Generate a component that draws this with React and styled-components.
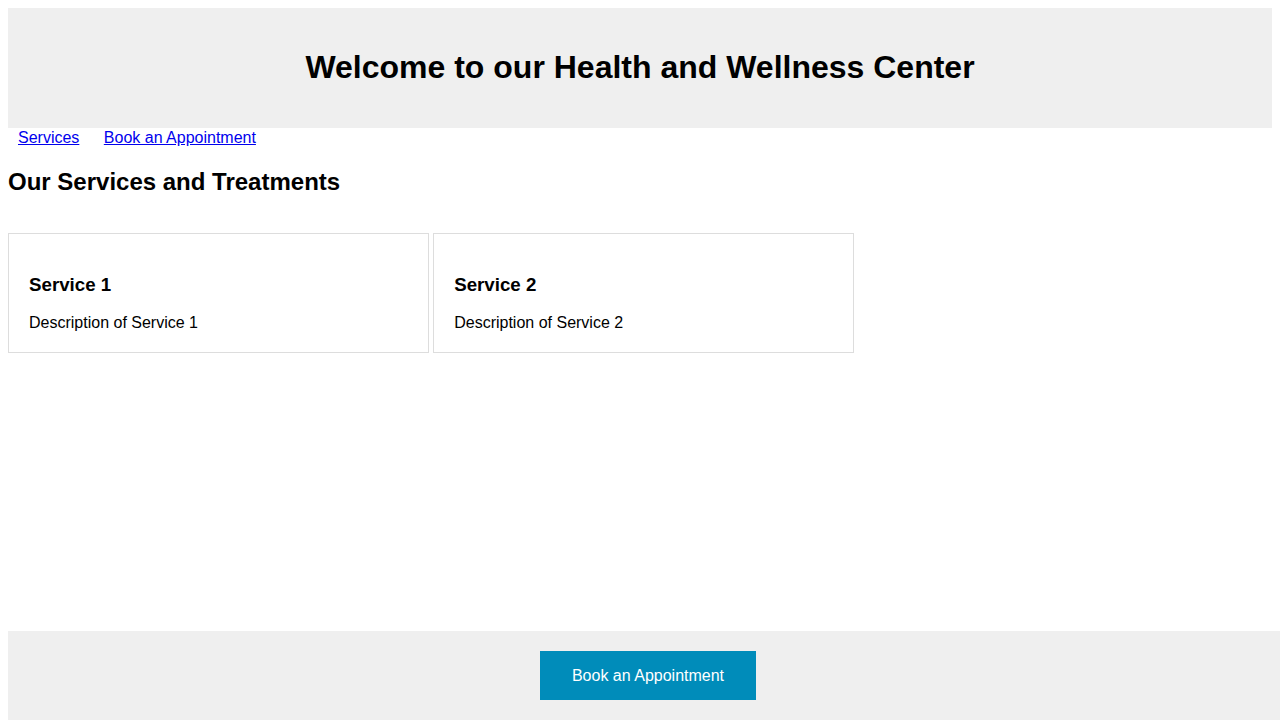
import React from "react";
import styled, { createGlobalStyle } from "styled-components";

const Global = createGlobalStyle`
  body {
    margin: 8px;
    font-family: "Liberation Sans", Arial, sans-serif;
    color: #000;
    background: #fff;
  }
`;

const Header = styled.header`
  background: #efefef;
  padding: 20px;
  text-align: center;
`;

const Title = styled.h1`
  font-size: 32px;
  margin: 21.44px 0;
`;

const Nav = styled.nav`
  padding-top: 1px;
  line-height: 18px;
  font-size: 16px;
`;

const NavLink = styled.a`
  color: #0000ee;
  margin: 0 10px;
`;

const SectionTitle = styled.h2`
  font-size: 24px;
  margin: 21px 0 19.92px;
`;

const Cards = styled.div`
  margin-top: 37px;
  font-size: 0;
`;

const Card = styled.div`
  display: inline-block;
  vertical-align: top;
  box-sizing: content-box;
  width: 30%;
  padding: 20px;
  border: 1px solid #ddd;
  font-size: 16px;
  & + & {
    margin-left: 4px;
  }
`;

const CardTitle = styled.h3`
  font-size: 18.72px;
  margin: 19.72px 0 18.72px;
`;

const CardText = styled.p`
  margin: 0;
`;

const Footer = styled.footer`
  position: fixed;
  bottom: 0;
  width: 100%;
  background: #efefef;
  padding: 20px 0;
  text-align: center;
`;

const Button = styled.a`
  display: inline-block;
  background: #008cba;
  color: #fff;
  padding: 15px 32px;
  font-size: 16px;
  line-height: 19px;
  text-decoration: none;
`;

const services = [
  { title: "Service 1", text: "Description of Service 1" },
  { title: "Service 2", text: "Description of Service 2" },
];

export default function App() {
  return (
    <>
      <Global />
      <Header>
        <Title>Welcome to our Health and Wellness Center</Title>
      </Header>
      <Nav>
        <NavLink href="#services">Services</NavLink>{" "}
        <NavLink href="#book">Book an Appointment</NavLink>
      </Nav>
      <section id="services">
        <SectionTitle>Our Services and Treatments</SectionTitle>
        <Cards>
          {services.map((s) => (
            <Card key={s.title}>
              <CardTitle>{s.title}</CardTitle>
              <CardText>{s.text}</CardText>
            </Card>
          ))}
        </Cards>
      </section>
      <Footer>
        <Button href="#book">Book an Appointment</Button>
      </Footer>
    </>
  );
}
